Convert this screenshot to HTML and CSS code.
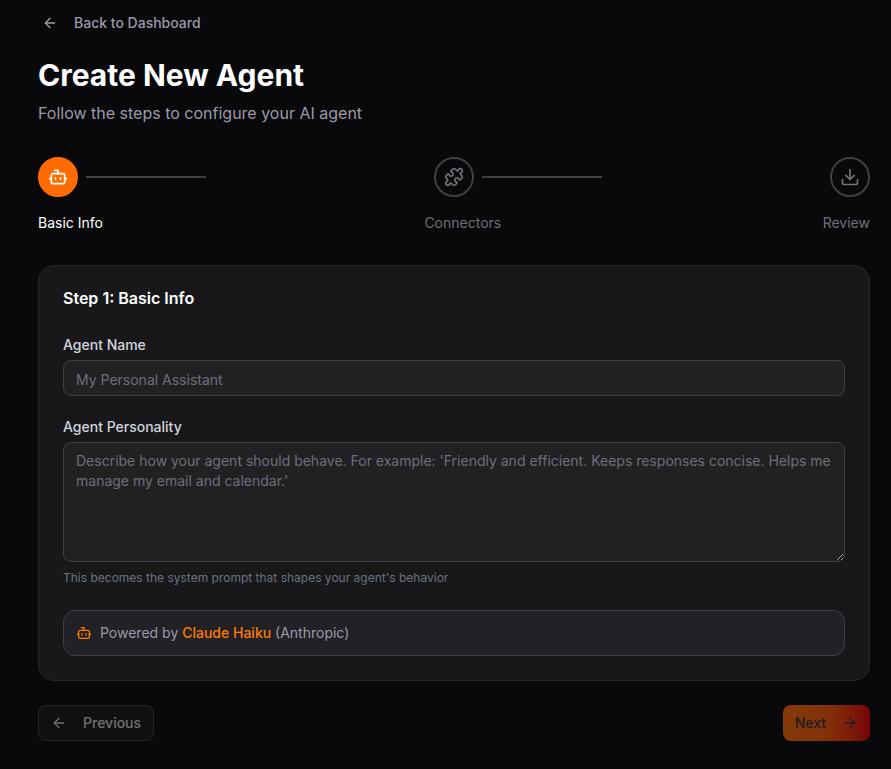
FILE: index.html
```html
<!DOCTYPE html>
<html>
    <head>
        <title>Create New Agent</title>
        <meta charset="utf-8">
        <meta name="viewport" content="width=device-width, initial-scale=1.0">
        <link rel="stylesheet" href="styles.css">
    </head>
    <body>
        <main class="page">
            <a class="back" href="#">
                <svg class="icon" viewBox="0 0 24 24"><path d="m12 19-7-7 7-7"/><path d="M19 12H5"/></svg>
                <span>Back to Dashboard</span>
            </a>

            <h1 class="title">Create New Agent</h1>
            <p class="subtitle">Follow the steps to configure your AI agent</p>

            <div class="steps">
                <div class="step">
                    <div class="circle active">
                        <svg class="icon icon-step" viewBox="0 0 24 24"><path d="M12 8V4H8"/><rect width="16" height="12" x="4" y="8" rx="2"/><path d="M2 14h2"/><path d="M20 14h2"/><path d="M15 13v2"/><path d="M9 13v2"/></svg>
                    </div>
                    <div class="line"></div>
                </div>
                <div class="step">
                    <div class="circle">
                        <svg class="icon icon-step" viewBox="0 0 24 24"><path d="M15.39 4.39a1 1 0 0 0 1.68-.474 2.5 2.5 0 1 1 3.014 3.015 1 1 0 0 0-.474 1.68l1.683 1.682a2.414 2.414 0 0 1 0 3.414L19.61 15.39a1 1 0 0 1-1.68-.474 2.5 2.5 0 1 0-3.014 3.015 1 1 0 0 1 .474 1.68l-1.683 1.682a2.414 2.414 0 0 1-3.414 0L8.61 19.61a1 1 0 0 0-1.68.474 2.5 2.5 0 1 1-3.014-3.015 1 1 0 0 0 .474-1.68l-1.683-1.682a2.414 2.414 0 0 1 0-3.414L4.39 8.61a1 1 0 0 1 1.68.474 2.5 2.5 0 1 0 3.014-3.015 1 1 0 0 1-.474-1.68l1.683-1.682a2.414 2.414 0 0 1 3.414 0z"/></svg>
                    </div>
                    <div class="line"></div>
                </div>
                <div class="step">
                    <div class="circle">
                        <svg class="icon icon-step" viewBox="0 0 24 24"><path d="M12 15V3"/><path d="M21 15v4a2 2 0 0 1-2 2H5a2 2 0 0 1-2-2v-4"/><path d="m7 10 5 5 5-5"/></svg>
                    </div>
                </div>
            </div>
            <div class="step-labels">
                <span class="step-label current">Basic Info</span>
                <span class="step-label">Connectors</span>
                <span class="step-label">Review</span>
            </div>

            <section class="card">
                <h2 class="card-title">Step 1: Basic Info</h2>

                <label class="field-label" for="name">Agent Name</label>
                <input class="field line-field" id="name" type="text" placeholder="My Personal Assistant">

                <label class="field-label second" for="personality">Agent Personality</label>
                <textarea class="field area" id="personality" placeholder="Describe how your agent should behave. For example: 'Friendly and efficient. Keeps responses concise. Helps me manage my email and calendar.'"></textarea>
                <p class="hint">This becomes the system prompt that shapes your agent's behavior</p>

                <div class="powered">
                    <svg class="icon icon-orange" viewBox="0 0 24 24"><path d="M12 8V4H8"/><rect width="16" height="12" x="4" y="8" rx="2"/><path d="M2 14h2"/><path d="M20 14h2"/><path d="M15 13v2"/><path d="M9 13v2"/></svg>
                    <span>Powered by <strong>Claude Haiku</strong> (Anthropic)</span>
                </div>
            </section>

            <div class="actions">
                <button class="button prev" type="button" disabled>
                    <svg class="icon" viewBox="0 0 24 24"><path d="m12 19-7-7 7-7"/><path d="M19 12H5"/></svg>
                    <span>Previous</span>
                </button>
                <button class="button next" type="button" disabled>
                    <span>Next</span>
                    <svg class="icon" viewBox="0 0 24 24"><path d="M5 12h14"/><path d="m12 5 7 7-7 7"/></svg>
                </button>
            </div>
        </main>
    </body>
</html>
```

FILE: styles.css
```css
* {
    box-sizing: border-box;
}
html, body {
    margin: 0;
    height: 100%;
    background: #09090b;
}
body {
    font-family: "Inter", "Liberation Sans", sans-serif;
    color: #fafafa;
    overflow: hidden;
}
.page {
    padding: 5px 21px 0 38px;
}
.icon {
    width: 16px;
    height: 16px;
    flex: none;
    fill: none;
    stroke: currentColor;
    stroke-width: 2;
    stroke-linecap: round;
    stroke-linejoin: round;
}
.back {
    display: flex;
    align-items: center;
    gap: 16px;
    height: 36px;
    padding-left: 4px;
    font-size: 14px;
    font-weight: 500;
    line-height: 20px;
    color: #9a9aa8;
    text-decoration: none;
}
.title {
    margin: 16px 0 0;
    font-size: 30px;
    font-weight: 700;
    line-height: 36px;
    color: #ffffff;
}
.subtitle {
    margin: 8px 0 0;
    font-size: 16px;
    line-height: 24px;
    color: #9a9aa8;
}
.steps {
    display: flex;
    justify-content: space-between;
    margin-top: 32px;
}
.step {
    display: flex;
    align-items: center;
    gap: 8px;
}
.circle {
    display: flex;
    align-items: center;
    justify-content: center;
    width: 40px;
    height: 40px;
    border: 2px solid #3f3f46;
    border-radius: 50%;
    color: #71717a;
}
.circle.active {
    background: #ff6b00;
    border-color: #ff6b00;
    color: #ffffff;
}
.icon-step {
    width: 20px;
    height: 20px;
}
.line {
    width: 120px;
    height: 2px;
    background: #3f3f46;
}
.step-labels {
    display: flex;
    justify-content: space-between;
    margin-top: 16px;
}
.step-label {
    font-size: 14px;
    line-height: 20px;
    color: #6e6e7a;
}
.step-label.current {
    color: #ffffff;
}
.card {
    margin-top: 32px;
    padding: 20px 24px 24px;
    background: #18181b;
    border: 1px solid #27272a;
    border-radius: 16px;
}
.card-title {
    margin: 0;
    font-size: 16px;
    font-weight: 600;
    line-height: 24px;
    color: #ffffff;
}
.field-label {
    display: block;
    margin: 25px 0 5px;
    font-size: 14px;
    font-weight: 500;
    line-height: 20px;
    color: #d4d4dc;
}
.field-label.second {
    margin-top: 21px;
}
.field {
    display: block;
    width: 100%;
    height: 36px;
    padding: 8px 12px;
    background: #212124;
    border: 1px solid #3f3f46;
    border-radius: 8px;
    font-family: inherit;
    font-size: 14px;
    line-height: 20px;
    color: #fafafa;
    outline: none;
}
.field::placeholder {
    color: #6e6e7a;
    opacity: 1;
}
.line-field {
    padding-top: 9px;
    padding-bottom: 7px;
}
.area {
    height: 120px;
    resize: vertical;
}
.hint {
    margin: 8px 0 0;
    font-size: 12px;
    line-height: 16px;
    color: #6b7080;
}
.powered {
    display: flex;
    align-items: center;
    gap: 8px;
    margin-top: 24px;
    padding: 12px;
    background: #212126;
    border: 1px solid #3f3f46;
    border-radius: 12px;
    font-size: 14px;
    line-height: 20px;
    color: #9a9aa8;
}
.powered strong {
    font-weight: 500;
    color: #ff7a00;
}
.icon-orange {
    color: #ff7a00;
}
.actions {
    display: flex;
    justify-content: space-between;
    margin-top: 24px;
}
.button {
    display: flex;
    align-items: center;
    gap: 16px;
    height: 36px;
    padding: 0 12px;
    border-radius: 8px;
    font-family: inherit;
    font-size: 14px;
    font-weight: 500;
    line-height: 20px;
    opacity: 0.5;
}
.prev {
    background: #18181b;
    border: 1px solid #3f3f46;
    color: #d4d4d8;
}
.next {
    background: linear-gradient(90deg, #ff6a05 0%, #ff5a09 50%, #f33309 75%, #e30005 100%);
    border: none;
    color: #333338;
}
```
